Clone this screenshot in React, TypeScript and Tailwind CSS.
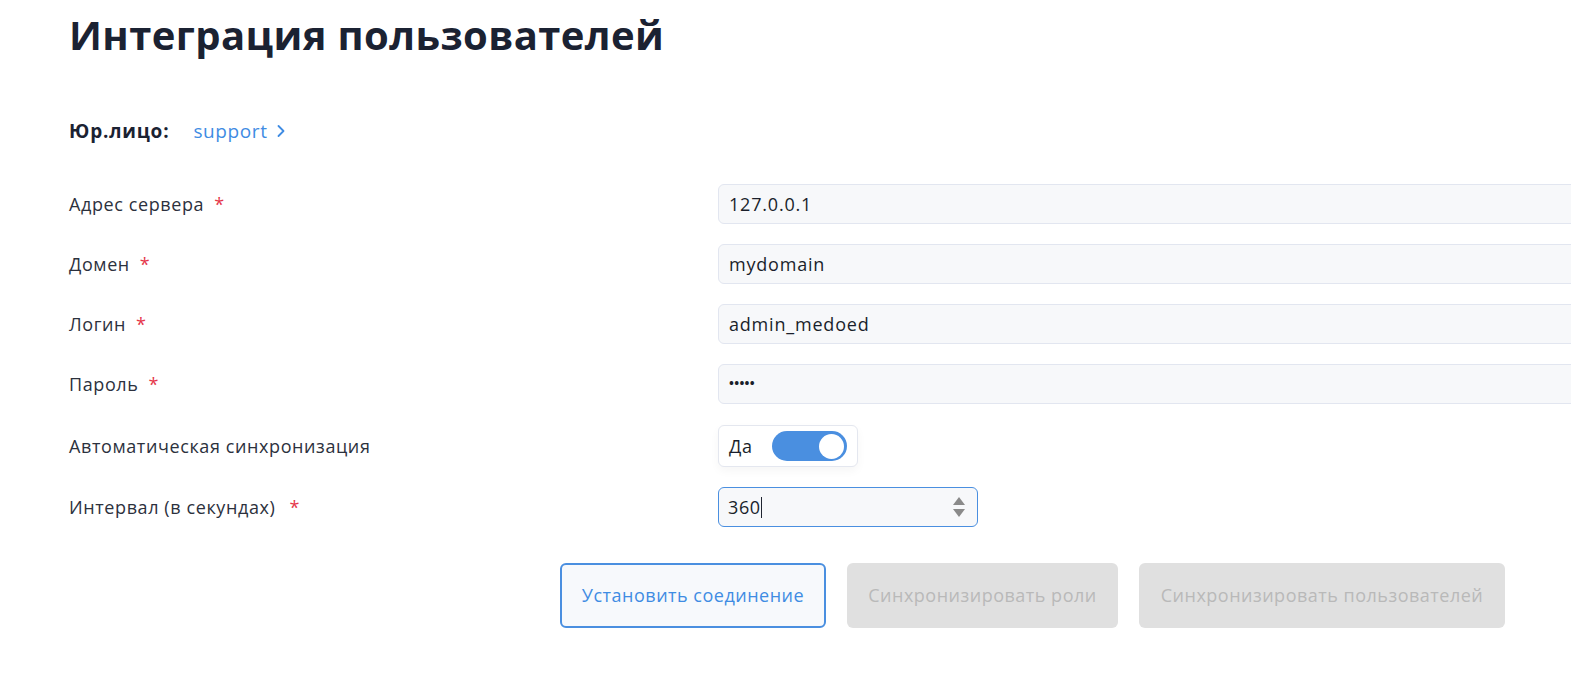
import { ChevronRight } from "lucide-react"

const fields = [
  { label: "Адрес сервера", value: "127.0.0.1" },
  { label: "Домен", value: "mydomain" },
  { label: "Логин", value: "admin_medoed" },
  { label: "Пароль", value: "•••••", password: true },
]

function Star() {
  return <span className="ml-[10px] text-[#e5364a]">*</span>
}

export default function App() {
  return (
    <div className="w-[1571px] h-[676px] overflow-hidden bg-white font-['Open_Sans',sans-serif] text-[#2c313d]">
      <div className="pl-[69px] pt-[11px]">
        <h1 className="text-[40px] font-bold leading-[48px] text-[#1b2232] tracking-[0.4px]">
          Интеграция пользователей
        </h1>

        {/* Legal entity */}
        <div className="mt-[60px] flex items-center h-[24px]">
          <span className="text-[19px] font-bold text-[#1b2232] tracking-[0.8px]">Юр.лицо:</span>
          <a href="#" className="ml-[24px] flex items-center text-[19px] tracking-[0.6px] text-[#3f8ce3]">
            support
            <ChevronRight className="ml-[3px] w-[20px] h-[20px]" strokeWidth={2.2} />
          </a>
        </div>

        {/* Form */}
        <div className="mt-[41px] flex flex-col">
          {fields.map((f) => (
            <div key={f.label} className="flex items-center h-[40px] mb-[20px]">
              <div className="w-[649px] shrink-0 text-[18px] tracking-[0.6px]">
                {f.label}
                <Star />
              </div>
              <div className="w-[900px] shrink-0 h-[40px] flex items-center px-[10px] rounded-[6px] border border-[#e2e6f0] bg-[#f7f8fa] text-[18px] tracking-[0.8px] text-[#1a1f2b]">
                {f.password ? <span className="text-[13px] font-bold tracking-[0.3px]">{f.value}</span> : f.value}
              </div>
            </div>
          ))}

          <div className="flex items-center h-[42px] mt-[1px]">
            <div className="w-[649px] shrink-0 text-[18px] tracking-[0.6px]">Автоматическая синхронизация</div>
            <div className="flex items-center shrink-0 h-[42px] w-[140px] px-[10px] rounded-[6px] border border-[#e4e7ef] bg-white shadow-[0_4px_10px_rgba(0,0,0,0.04)]">
              <span className="text-[18px] tracking-[0.6px] text-[#1a1f2b]">Да</span>
              <div className="ml-auto w-[75px] h-[30px] rounded-full bg-[#4a8fe0] flex items-center justify-end pr-[3px]">
                <div className="w-[25px] h-[25px] rounded-full bg-white" />
              </div>
            </div>
          </div>

          <div className="flex items-center h-[40px] mt-[20px]">
            <div className="w-[649px] shrink-0 text-[18px] tracking-[0.6px]">
              Интервал (в секундах)
              <span className="ml-[14px] text-[#e5364a]">*</span>
            </div>
            <div className="w-[260px] shrink-0 h-[40px] flex items-center pl-[9px] pr-[12px] rounded-[6px] border border-[#4a8fe0] bg-[#f7f8fa] text-[18px] tracking-[0.6px] text-[#1a1f2b]">
              <span>360</span>
              <span className="w-px h-[21px] bg-[#1f2430]" />
              <div className="ml-auto flex flex-col items-center gap-[4px]">
                <svg width="12" height="8" viewBox="0 0 12 8"><path d="M6 0L12 8H0Z" fill="#8a8a8a" /></svg>
                <svg width="12" height="8" viewBox="0 0 12 8"><path d="M0 0H12L6 8Z" fill="#8a8a8a" /></svg>
              </div>
            </div>
          </div>
        </div>

        {/* Actions */}
        <div className="mt-[36px] pl-[491px] flex gap-[21px]">
          <button className="w-[266px] h-[65px] shrink-0 rounded-[6px] border-2 border-[#4a8fe0] bg-[#f7f9fc] text-[18px] tracking-[0.5px] text-[#3f8ce3]">
            Установить соединение
          </button>
          <button className="w-[271px] h-[65px] shrink-0 rounded-[6px] bg-[#e0e0e0] text-[18px] tracking-[0.5px] text-[#b9b9b9]" disabled>
            Синхронизировать роли
          </button>
          <button className="w-[366px] h-[65px] shrink-0 rounded-[6px] bg-[#e0e0e0] text-[18px] tracking-[0.5px] text-[#b9b9b9]" disabled>
            Синхронизировать пользователей
          </button>
        </div>
      </div>
    </div>
  )
}
